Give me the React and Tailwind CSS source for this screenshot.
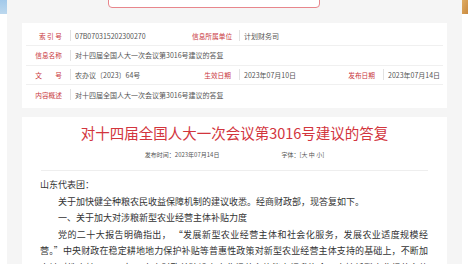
import React from "react";

const FONT = { fontFamily: '"Noto Sans CJK SC", "Liberation Sans", sans-serif' };

function Sep() {
  return <span className="ml-[8px] h-[11px] w-px shrink-0 bg-[#e2e2e2]" />;
}

function Label({ w, children }) {
  return (
    <span className={`${w} shrink-0 text-right text-[6.7px] text-[#c9373e] whitespace-nowrap`}>
      {children}
    </span>
  );
}

export default function App() {
  return (
    <div lang="zh-CN" className="flex h-[264px] w-[468px] overflow-hidden bg-white" style={FONT}>
      {/* left edge */}
      <div className="w-[7px] shrink-0">
        <div className="h-[14px] bg-gradient-to-b from-[#a3c9ea] to-[#bcd8ee]" />
      </div>

      <div className="w-[455px] shrink-0 bg-[#f5f5f5]">
        {/* search bar, mostly scrolled off */}
        <div className="-mt-[16px] flex h-[24px] items-end">
          <div className="ml-[101px] flex h-[24px] w-[212px] items-center justify-between rounded-[4px] border border-[#e8868c] bg-white pl-[4px] pr-[9px]">
            <span className="text-[6px] text-[#aaa] -mt-[10px]">请输入关键词</span>
            <svg width="14" height="14" viewBox="0 0 14 14" fill="none" className="-mt-[6px]">
              <circle cx="6" cy="6" r="4.5" stroke="#d9363e" strokeWidth="1.6" />
              <path d="M9.3 9.3 L12.5 12.5" stroke="#d9363e" strokeWidth="1.8" strokeLinecap="round" />
            </svg>
          </div>
          <span className="mb-[14px] ml-[7px] text-[7px] text-[#777]">高级检索</span>
        </div>

        {/* info table */}
        <div className="ml-[15px] mt-[15px] w-[425px] whitespace-nowrap bg-white px-[4px] py-[3.5px] text-[7px] text-[#555]">
          <div className="flex h-[19.5px] items-center border-b border-[#f0f0f0]">
            <Label w="w-[36px]">索 引 号</Label>
            <Sep />
            <span className="ml-[4px] w-[117px] shrink-0">07B070315202300270</span>
            <Label w="w-[39px]">信息所属单位</Label>
            <Sep />
            <span className="ml-[4px]">计划财务司</span>
          </div>
          <div className="flex h-[19.5px] items-center border-b border-[#f0f0f0]">
            <Label w="w-[36px]">信息名称</Label>
            <Sep />
            <span className="ml-[4px]">对十四届全国人大一次会议第3016号建议的答复</span>
          </div>
          <div className="flex h-[19.5px] items-center border-b border-[#f0f0f0]">
            <Label w="w-[36px]">文　　号</Label>
            <Sep />
            <span className="ml-[4px] w-[117px] shrink-0">农办议〔2023〕64号</span>
            <Label w="w-[39px]">生效日期</Label>
            <Sep />
            <span className="ml-[4px] w-[91px] shrink-0">2023年07月10日</span>
            <Label w="w-[40px]">发布日期</Label>
            <Sep />
            <span className="ml-[4px]">2023年07月14日</span>
          </div>
          <div className="flex h-[19.5px] items-center">
            <Label w="w-[36px]">内容概述</Label>
            <Sep />
            <span className="ml-[4px]">对十四届全国人大一次会议第3016号建议的答复</span>
          </div>
        </div>

        {/* article */}
        <div className="ml-[15px] mt-[9px] w-[425px] bg-white px-[18px] pt-[6px]">
          <h1 className="text-center text-[14.5px] leading-[20px] text-[#d2353d]">
            对十四届全国人大一次会议第3016号建议的答复
          </h1>
          <div className="mt-[7px] flex justify-center gap-[62px] text-[6px] leading-[10px] text-[#555]">
            <span>发布时间：2023年07月14日</span>
            <span>字体：[大 中 小]</span>
          </div>
          <div className="mx-[1px] mt-[10px] h-px bg-[#eeeeee]" />
          <div className="mt-[6px] w-[388px] text-justify text-[9px] leading-[16.5px] text-[#333]">
            <p>山东代表团：</p>
            <p className="indent-[2em]">
              关于加快健全种粮农民收益保障机制的建议收悉。经商财政部，现答复如下。
            </p>
            <p className="indent-[2em]">一、关于加大对涉粮新型农业经营主体补贴力度</p>
            <p className="indent-[2em]">
              党的二十大报告明确指出， “发展新型农业经营主体和社会化服务，发展农业适度规模经
              <span className="whitespace-nowrap">营。”</span>
              中央财政在稳定耕地地力保护补贴等普惠性政策对新型农业经营主体支持的基础上，不断加大针对性支持。2023年，中央财政单独设立农业经营主体能力提升资金，支持新型农业经营主体培育。
            </p>
          </div>
        </div>
      </div>

      {/* right edge */}
      <div className="w-[6px] shrink-0">
        <div className="h-[14px] bg-gradient-to-br from-[#e0ad64] to-[#c98a3e]" />
      </div>
    </div>
  );
}
